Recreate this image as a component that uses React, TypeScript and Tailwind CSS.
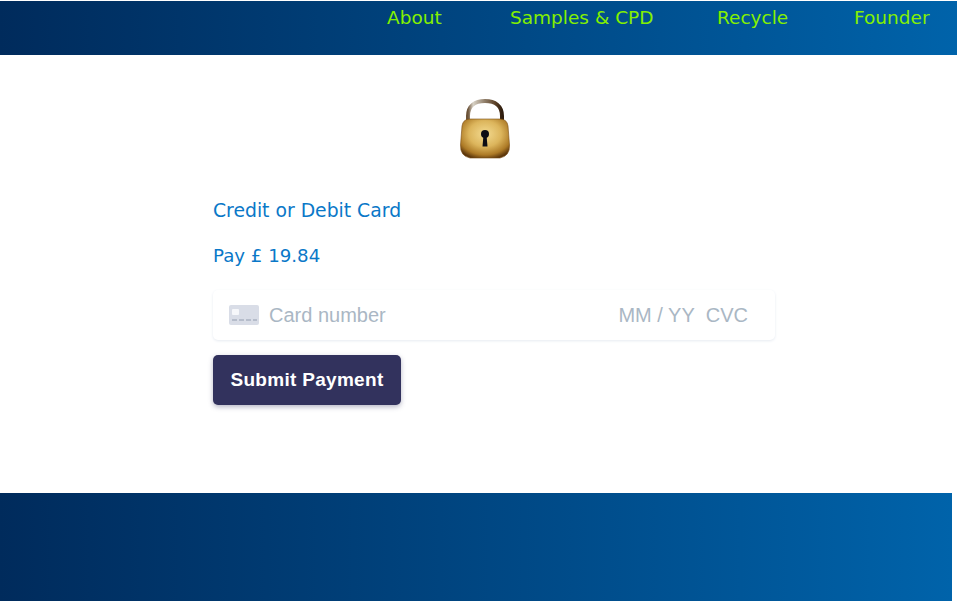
const links = [
  { label: "About", width: "w-[57px]" },
  { label: "Samples & CPD", width: "w-[141px]" },
  { label: "Recycle", width: "w-[71px]" },
  { label: "Founder", width: "w-[76px]" },
];

function Lock() {
  return (
    <svg width="50" height="61" viewBox="0 0 50 61" className="block">
      <defs>
        <radialGradient id="body" cx="0.5" cy="0.38" r="0.66">
          <stop offset="0" stopColor="#f3da90" />
          <stop offset="0.5" stopColor="#dcb55c" />
          <stop offset="0.82" stopColor="#ad7a26" />
          <stop offset="1" stopColor="#5e380c" />
        </radialGradient>
        <linearGradient id="shackle" x1="0" y1="0" x2="1" y2="0">
          <stop offset="0" stopColor="#6b5238" />
          <stop offset="0.15" stopColor="#d8d2c6" />
          <stop offset="0.5" stopColor="#8f7d68" />
          <stop offset="0.8" stopColor="#5d4228" />
          <stop offset="1" stopColor="#2f1d0e" />
        </linearGradient>
      </defs>
      <path
        d="M8 24V18C8 8 15 3 25 3s17 5 17 15v6"
        fill="none"
        stroke="url(#shackle)"
        strokeWidth="4"
      />
      <path
        d="M10 21H40Q47 21 48 28L49.500 47Q50 58 40 60H10Q0 58 0.500 47L2 28Q3 21 10 21Z"
        fill="url(#body)"
        stroke="#7a4d14"
        strokeWidth="0.6"
      />
      <circle cx="25" cy="36" r="4" fill="#0d0d14" />
      <path d="M23.500 37h3l1 11.500h-5z" fill="#0d0d14" />
    </svg>
  );
}

function CardIcon() {
  return (
    <svg width="30" height="20" viewBox="0 0 30 20" className="block">
      <rect width="30" height="20" rx="2" fill="#d9dde7" />
      <rect x="3" y="4" width="7" height="6" rx="1" fill="#f6f7fa" />
      <path d="M3 15h5M10 15h5M17 15h5M24 15h4" stroke="#aab2c2" strokeWidth="1.500" />
    </svg>
  );
}

export default function App() {
  return (
    <div className="h-[601px] w-[957px] overflow-hidden bg-white pt-px font-['DejaVu_Sans',sans-serif]">
      <header className="flex h-[54px] justify-end gap-[66px] bg-gradient-to-r from-[#002b5c] to-[#0063aa] pr-[27px] pt-[4px]">
        {links.map((link) => (
          <a key={link.label} className={`${link.width} whitespace-nowrap text-[18.5px] leading-[26px] text-[#84f000]`}>
            {link.label}
          </a>
        ))}
      </header>

      <main className="h-[438px] px-[213px]">
        <div className="flex justify-center pl-[13px] pt-[43px]">
          <Lock />
        </div>
        <p className="mt-[39px] text-[18.8px] leading-[26px] text-[#0a78c8]">Credit or Debit Card</p>
        <p className="mt-[19px] text-[18.2px] leading-[26px] text-[#0a78c8]">Pay £ 19.84</p>

        <div className="mt-[21px] flex h-[50px] w-[562px] items-center rounded-[5px] bg-white pl-4 pr-[27px] font-['Liberation_Sans',sans-serif] text-[20px] text-[#aab7c4] shadow-[0_1px_3px_0_#e6ebf1]">
          <CardIcon />
          <span className="ml-[10px]">Card number</span>
          <span className="ml-auto">MM / YY</span>
          <span className="ml-[11px]">CVC</span>
        </div>

        <button className="mt-[15px] h-[50px] w-[188px] rounded-[5px] bg-[#32325d] font-['Liberation_Sans',sans-serif] text-[19px] font-bold tracking-[0.3px] text-white shadow-[0_2px_5px_0_rgba(50,50,93,0.35)]">
          Submit Payment
        </button>
      </main>

      <footer className="h-[108px] w-[952px] bg-gradient-to-r from-[#002b5c] to-[#0063aa]" />
    </div>
  );
}
